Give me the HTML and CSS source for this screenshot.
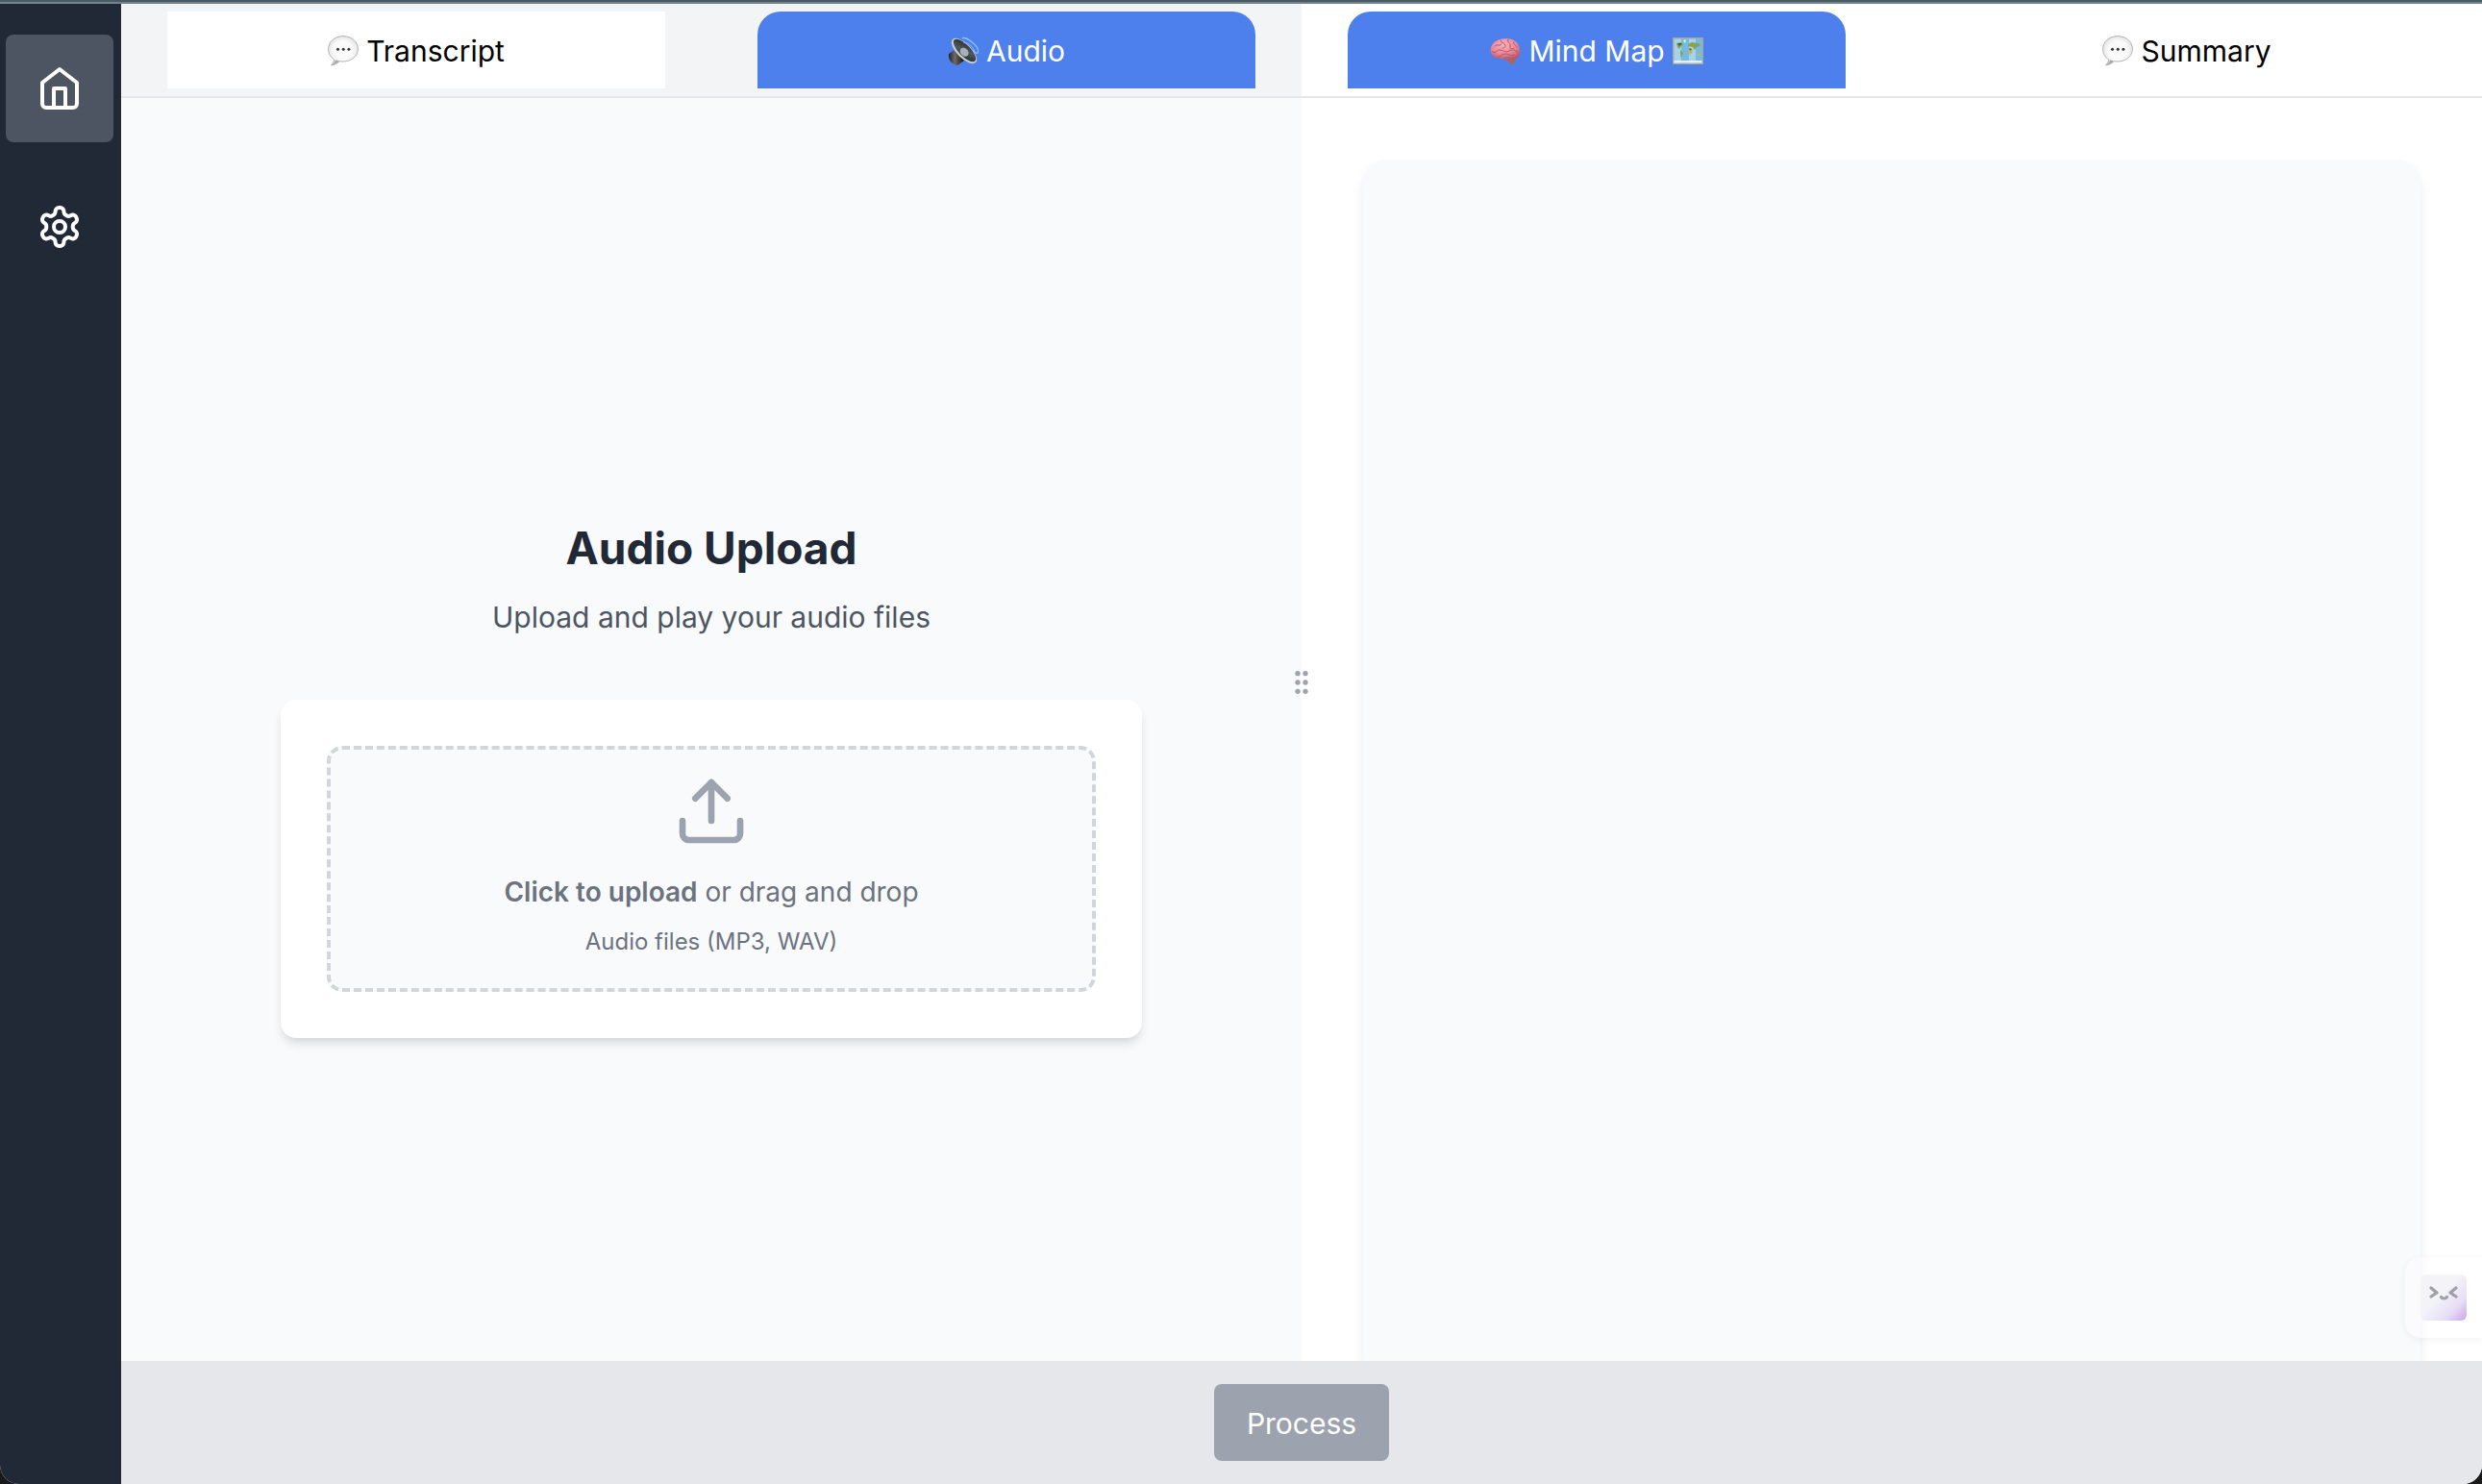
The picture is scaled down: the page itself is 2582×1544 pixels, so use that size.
FILE: index.html
```
<!DOCTYPE html>
<html lang="en">
<head>
<meta charset="utf-8">
<title>Audio Upload</title>
<meta name="viewport" content="width=device-width, initial-scale=1">
<link rel="stylesheet" href="styles.css">
</head>
<body>
<svg class="defs" aria-hidden="true">
  <defs>
    <radialGradient id="bubble-fill" cx=".5" cy=".5" r=".55">
      <stop offset=".6" stop-color="#fafafa"/><stop offset=".9" stop-color="#e6e6e6"/><stop offset="1" stop-color="#c4c4c4"/>
    </radialGradient>
    <radialGradient id="brain-fill" cx=".45" cy=".3" r=".7">
      <stop offset="0" stop-color="#f8b3bd"/><stop offset=".6" stop-color="#e88997"/><stop offset="1" stop-color="#b9566a"/>
    </radialGradient>
    <linearGradient id="cone-fill" x1="0" y1="0" x2="1" y2="1">
      <stop offset="0" stop-color="#222"/><stop offset=".5" stop-color="#50595e"/><stop offset="1" stop-color="#20272b"/>
    </linearGradient>
    <linearGradient id="magnet-fill" x1="0" y1="0" x2="1" y2="0">
      <stop offset="0" stop-color="#222"/><stop offset=".4" stop-color="#70696a"/><stop offset="1" stop-color="#111"/>
    </linearGradient>
    <linearGradient id="face-fill" x1="0" y1="0" x2="1" y2="1">
      <stop offset=".45" stop-color="#f3f3f8"/><stop offset=".75" stop-color="#e7dcf5"/><stop offset="1" stop-color="#c9a4ea"/>
    </linearGradient>
    <symbol id="bubble" viewBox="0 0 32 32">
      <path d="M16 .6C7.200.6.6 6.500.6 14c0 5 2.400 8.600 6 11-.3 2.400-1.500 4.200-3.200 5.800 3.700-.2 6.600-1.700 8.700-4.100 1.200.2 2.400.3 3.700.3 8.800 0 15.600-5.500 15.600-13S24.800.6 16 .6z" fill="url(#bubble-fill)" stroke="#b4b4b4" stroke-width="1"/>
      <path d="M5 30.300c1.500-1.400 2.500-3 2.800-5l4.200 1.300c-2 2.200-4 3.300-7 3.700z" fill="#aaa"/>
      <g fill="#333"><circle cx="10.500" cy="14.300" r="1.500"/><circle cx="16.200" cy="14.300" r="1.500"/><circle cx="21.900" cy="14.300" r="1.500"/></g>
    </symbol>
  </defs>
</svg>
<div class="app">
  <nav class="sidebar" aria-label="Main">
    <button class="nav-button nav-button-active" type="button" aria-label="Home">
      <svg class="nav-icon" viewBox="0 0 24 24"><path d="m3 9 9-7 9 7v11a2 2 0 0 1-2 2H5a2 2 0 0 1-2-2z"/><path d="M9 22V12h6v10"/></svg>
    </button>
    <button class="nav-button" type="button" aria-label="Settings">
      <svg class="nav-icon" viewBox="0 0 24 24"><path d="M12.220 2h-.44a2 2 0 0 0-2 2v.18a2 2 0 0 1-1 1.730l-.43.25a2 2 0 0 1-2 0l-.15-.08a2 2 0 0 0-2.730.73l-.22.38a2 2 0 0 0 .73 2.730l.15.1a2 2 0 0 1 1 1.720v.51a2 2 0 0 1-1 1.740l-.15.09a2 2 0 0 0-.73 2.730l.22.38a2 2 0 0 0 2.730.73l.15-.08a2 2 0 0 1 2 0l.43.25a2 2 0 0 1 1 1.730V20a2 2 0 0 0 2 2h.44a2 2 0 0 0 2-2v-.18a2 2 0 0 1 1-1.730l.43-.25a2 2 0 0 1 2 0l.15.08a2 2 0 0 0 2.730-.73l.22-.39a2 2 0 0 0-.73-2.730l-.15-.08a2 2 0 0 1-1-1.740v-.5a2 2 0 0 1 1-1.740l.15-.09a2 2 0 0 0 .73-2.730l-.22-.38a2 2 0 0 0-2.730-.73l-.15.08a2 2 0 0 1-2 0l-.43-.25a2 2 0 0 1-1-1.730V4a2 2 0 0 0-2-2z"/><circle cx="12" cy="12" r="3"/></svg>
    </button>
  </nav>
  <div class="content">
    <main class="panels">
      <section class="panel panel-source">
        <div class="tabs" role="tablist">
          <button class="tab" type="button" role="tab" aria-selected="false"><svg class="emoji" aria-hidden="true"><use href="#bubble"/></svg>Transcript</button>
          <button class="tab tab-active" type="button" role="tab" aria-selected="true">
            <svg class="emoji" viewBox="0 0 32 32" aria-hidden="true">
              <path d="M1 19l7-5 9 12-7 5C4 30 0 25 1 19z" fill="url(#magnet-fill)"/>
              <g transform="rotate(45 17 16)">
                <ellipse cx="17" cy="16" rx="17" ry="7.500" fill="#c9cdd0"/>
                <ellipse cx="17" cy="15.200" rx="15.400" ry="6" fill="url(#cone-fill)"/>
                <ellipse cx="18" cy="16.800" rx="5" ry="3.800" fill="#a8b1b6"/>
              </g>
              <g fill="none" stroke="#8fc0ff" stroke-width="1.300"><path d="M15 3c4-3 20 10 16 15-2 1-4-1-5-3"/><path d="M16 7c5 0 12 6 12 11" opacity=".6"/></g>
            </svg>Audio</button>
        </div>
        <div class="upload">
          <h1 class="upload-title">Audio Upload</h1>
          <p class="upload-subtitle">Upload and play your audio files</p>
          <div class="card">
            <label class="dropzone" for="audio-file">
              <svg class="upload-icon" viewBox="0 0 24 24" aria-hidden="true"><path d="M21 15v4a2 2 0 0 1-2 2H5a2 2 0 0 1-2-2v-4"/><path d="m17 8-5-5-5 5"/><path d="M12 3v12"/></svg>
              <span class="dropzone-text"><strong>Click to upload</strong> or drag and drop</span>
              <span class="dropzone-hint">Audio files (MP3, WAV)</span>
              <input class="file-input" id="audio-file" type="file" accept="audio/*">
            </label>
          </div>
        </div>
      </section>
      <section class="panel">
        <div class="tabs" role="tablist">
          <button class="tab tab-active" type="button" role="tab" aria-selected="true">
            <svg class="emoji" viewBox="0 0 32 32" aria-hidden="true">
              <path d="M18 24l8-1c1 3 0 6-3 7-3 0-4-3-5-6z" fill="#a8685f"/>
              <path d="M1 18C-1 11 5 4 13 3.500 21 1.500 29 5 31 13c1.500 6-1 11-6 12-4 1-6 0-9 0-4 0-5-2-8-2-4 0-6-2-7-5z" fill="url(#brain-fill)"/>
              <g fill="none" stroke="#b85268" stroke-width="1" stroke-linecap="round"><path d="M3 17c4 2 4-3 8-2s5 3 9 1 5-1 9 1M9 22c3 0 3-3 7-3s5 3 9 1M5 11c3-3 4 1 7-2M11 5c0 3 4 2 5 5s-3 3-3 3M19 4c-2 4 3 3 2 7s3 3 4 2M25 7c-2 2 3 3 3 5M14 24c2-2 5-1 7-1"/></g>
            </svg>Mind Map
            <svg class="emoji" viewBox="0 0 32 32" aria-hidden="true">
              <path d="M0 2h32v28H0z" fill="#a7a99b"/>
              <path d="M1.500 3.500H9v25H1.500zM17 3.500h7v25h-7z" fill="#a3d3ee"/><path d="M9 3.500h8v25H9zM24 3.500h6.500v25H24z" fill="#74bbe3"/>
              <path d="M1.500 26h29v2.500h-29z" fill="#e5eef0"/>
              <path d="M4 8l5-1 2 2-3 3-1 2-2-2zM8 15l3 3-1 3-1 3-1-5zM16 9l4-2 7 1 2 2-4 2-2 3-2-3-5-1z" fill="#8ca04e"/>
              <path d="M16 13l4 1 1 2-3 5-1-4zM25 19h4v2h-4z" fill="#d0b34f"/><path d="M5 8h5l-3 3zM17 13l3 1-2 2z" fill="#44642e"/><path d="M11 5l3-1-1 4z" fill="#e9f0e9"/>
            </svg></button>
          <button class="tab" type="button" role="tab" aria-selected="false"><svg class="emoji" aria-hidden="true"><use href="#bubble"/></svg>Summary</button>
        </div>
        <div class="map-area"><div class="map-canvas"></div></div>
      </section>
      <svg class="grip" viewBox="0 0 24 24" aria-hidden="true"><circle cx="9" cy="5" r="2"/><circle cx="9" cy="12" r="2"/><circle cx="9" cy="19" r="2"/><circle cx="15" cy="5" r="2"/><circle cx="15" cy="12" r="2"/><circle cx="15" cy="19" r="2"/></svg>
      <button class="assistant" type="button" aria-label="Assistant">
        <svg class="assistant-face" viewBox="0 0 48 48"><rect width="48" height="48" rx="6" fill="url(#face-fill)"/><g fill="none" stroke="#a0a0a8" stroke-width="3.200" stroke-linecap="round" stroke-linejoin="round"><path d="M11 14l6 5-6 4M37 14l-6 5 6 4M21.500 23.500c1 2 5 2 6 0"/></g></svg>
      </button>
    </main>
    <footer class="footer"><button class="process" type="button">Process</button></footer>
  </div>
</div>
</body>
</html>
```
FILE: styles.css
```
* {
  box-sizing: border-box;
}

body {
  margin: 0;
  background: #1a1a1a;
  font-family: Inter, "Liberation Sans", sans-serif;
  font-size: 30px;
  line-height: 48px;
  color: #000;
}

button {
  border: 0;
  padding: 0;
  background: none;
  font: inherit;
  color: inherit;
  cursor: pointer;
}

.defs {
  position: absolute;
  width: 0;
  height: 0;
}

.app {
  display: flex;
  min-height: 100vh;
  border-top: 2px solid #485b64;
  border-radius: 0 0 20px 20px;
  overflow: hidden;
  background: #fff;
  box-shadow: inset 0 2px #74828a;
}

.sidebar {
  display: flex;
  flex-direction: column;
  gap: 32px;
  width: 126px;
  margin-top: 2px;
  padding: 32px 6px;
  background: #212936;
}

.nav-button {
  display: grid;
  place-items: center;
  width: 112px;
  height: 112px;
  border-radius: 8px;
  color: #fff;
}

.nav-button-active {
  background: #4d5562;
}

.nav-icon {
  width: 48px;
  height: 48px;
}

.nav-icon,
.upload-icon {
  fill: none;
  stroke: currentColor;
  stroke-width: 2;
  stroke-linecap: round;
  stroke-linejoin: round;
}

.content {
  display: flex;
  flex: 1;
  flex-direction: column;
  margin-top: 2px;
}

.panels {
  position: relative;
  display: grid;
  flex: 1;
  grid-template-columns: 1fr 1fr;
}

.panel {
  display: flex;
  flex-direction: column;
}

.panel-source {
  background: #f9fafc;
}

.tabs {
  display: grid;
  grid-template-columns: 1fr 1fr;
  gap: 96px;
  padding: 8px 48px;
  border-bottom: 2px solid #e5e7ea;
}

.panel-source .tabs {
  background: #f2f4f6;
}

.tab {
  display: flex;
  align-items: center;
  justify-content: center;
  gap: 8px;
  height: 80px;
  padding-top: 2px;
  background: #fff;
}

.tab-active {
  border-radius: 24px 24px 0 0;
  background: #4d80ed;
  color: #fff;
}

.emoji {
  width: 32px;
  height: 32px;
}

.upload {
  display: flex;
  flex: 1;
  flex-direction: column;
  align-items: center;
  justify-content: center;
  padding: 98px 48px 0;
}

.upload-title {
  margin: 0 0 16px;
  padding-top: 2px;
  font-size: 46px;
  font-weight: 700;
  line-height: 64px;
  color: #212936;
}

.upload-subtitle {
  margin: 0 0 62px;
  color: #4d5562;
}

.card {
  width: 100%;
  max-width: 896px;
  padding: 48px;
  border-radius: 16px;
  background: #fff;
  box-shadow: 0 8px 12px -2px rgba(0, 0, 0, .1), 0 4px 8px -4px rgba(0, 0, 0, .1);
}

.dropzone {
  display: flex;
  flex-direction: column;
  align-items: center;
  justify-content: center;
  height: 256px;
  padding-bottom: 8px;
  border: 4px dashed #d2d5da;
  border-radius: 16px;
  background: #f9fafc;
  color: #6c727f;
  cursor: pointer;
}

.upload-icon {
  width: 80px;
  height: 80px;
  margin-bottom: 24px;
  color: #9da3ae;
}

.dropzone-text {
  margin-bottom: 16px;
  font-size: 28px;
  line-height: 40px;
}

.dropzone-text strong {
  font-weight: 600;
}

.dropzone-hint {
  font-size: 24px;
  line-height: 32px;
}

.file-input {
  display: none;
}

.map-area {
  display: flex;
  flex: 1;
  padding: 64px 64px 0;
}

.map-canvas {
  flex: 1;
  border-radius: 24px 24px 0 0;
  background: #f9fafc;
  box-shadow: 0 8px 12px rgba(0, 0, 0, .08);
  clip-path: inset(-24px -24px 0);
}

.grip {
  position: absolute;
  top: 50%;
  left: 50%;
  width: 32px;
  height: 32px;
  margin: -16px;
  fill: #9da3ae;
}

.assistant {
  position: absolute;
  right: 0;
  bottom: 24px;
  padding: 18px 16px;
  border-radius: 16px 0 0 16px;
  background: rgba(255, 255, 255, .3);
  box-shadow: 0 2px 8px rgba(0, 0, 0, .05);
}

.assistant-face {
  display: block;
  width: 48px;
  height: 48px;
}

.footer {
  display: flex;
  justify-content: center;
  padding: 24px;
  background: #e5e7eb;
}

.process {
  height: 80px;
  padding: 2px 34px 0;
  border-radius: 8px;
  background: #9da3ae;
  color: #fff;
}
```
